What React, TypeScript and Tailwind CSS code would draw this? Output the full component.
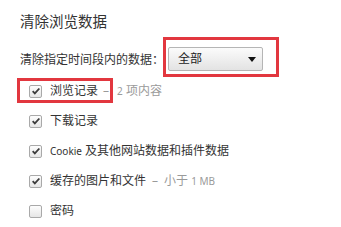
import React from 'react';

const Check = ({ checked }: { checked: boolean }) => (
  <span className="flex h-[13px] w-[13px] items-center justify-center rounded-[2px] border border-[#a9a9a9] bg-gradient-to-b from-[#fdfdfd] to-[#e6e6e6]">
    {checked && (
      <svg viewBox="0 0 12 12" className="h-[10px] w-[10px]">
        <path d="M2 6.2l2.6 2.6L10 3" fill="none" stroke="#3c3c3c" strokeWidth={2.2} />
      </svg>
    )}
  </span>
);

const Row = ({ checked, children }: { checked: boolean; children: React.ReactNode }) => (
  <div className="flex h-[30px] items-center pl-[9px]">
    <Check checked={checked} />
    <span className="ml-[8px] text-[12px] text-[#333]">{children}</span>
  </div>
);

const App = () => {
  return (
    <div
      className="relative h-[227px] w-[341px] overflow-hidden bg-white pl-[20px] pt-[11px]"
      style={{ fontFamily: '"Noto Sans", "Noto Sans CJK SC", sans-serif' }}
    >
      <h2 className="text-[14.5px] leading-[20px] text-[#333]">清除浏览数据</h2>

      <div className="mt-[16px] flex h-[24px] items-center">
        <span className="w-[148px] text-[12px] text-[#333]" style={{ fontFamily: '"Noto Sans CJK SC", sans-serif' }}>清除指定时间段内的数据：</span>
        <div className="flex h-[24px] w-[95px] items-center justify-between rounded-[2px] border border-[#b5b5b5] bg-gradient-to-b from-[#fbfbfb] to-[#e3e3e3] pl-[9px] pr-[6px]">
          <span className="text-[12px] text-[#222]">全部</span>
          <span className="h-0 w-0 border-x-[4px] border-t-[5px] border-x-transparent border-t-[#111]" />
        </div>
      </div>

      <div className="mt-[5px] flex flex-col">
        <Row checked>
          浏览记录<span className="ml-[5px] text-[#9a9a9a]">–<span className="ml-[8px] text-[10px]">2</span> 项内容</span>
        </Row>
        <Row checked>下载记录</Row>
        <Row checked>
          <span className="text-[10px]">Cookie</span> 及其他网站数据和插件数据
        </Row>
        <Row checked>
          缓存的图片和文件<span className="ml-[6px] text-[#9a9a9a]">–<span className="ml-[6px]">小于</span> <span className="text-[10px]">1 MB</span></span>
        </Row>
        <Row checked={false}>密码</Row>
      </div>

      <div className="absolute left-[163px] top-[37px] h-[40px] w-[116px] border-[3px] border-[#e2373f]" />
      <div className="absolute left-[17px] top-[78px] h-[25px] w-[96px] border-[3px] border-[#e2373f]" />
    </div>
  );
};

export default App;
